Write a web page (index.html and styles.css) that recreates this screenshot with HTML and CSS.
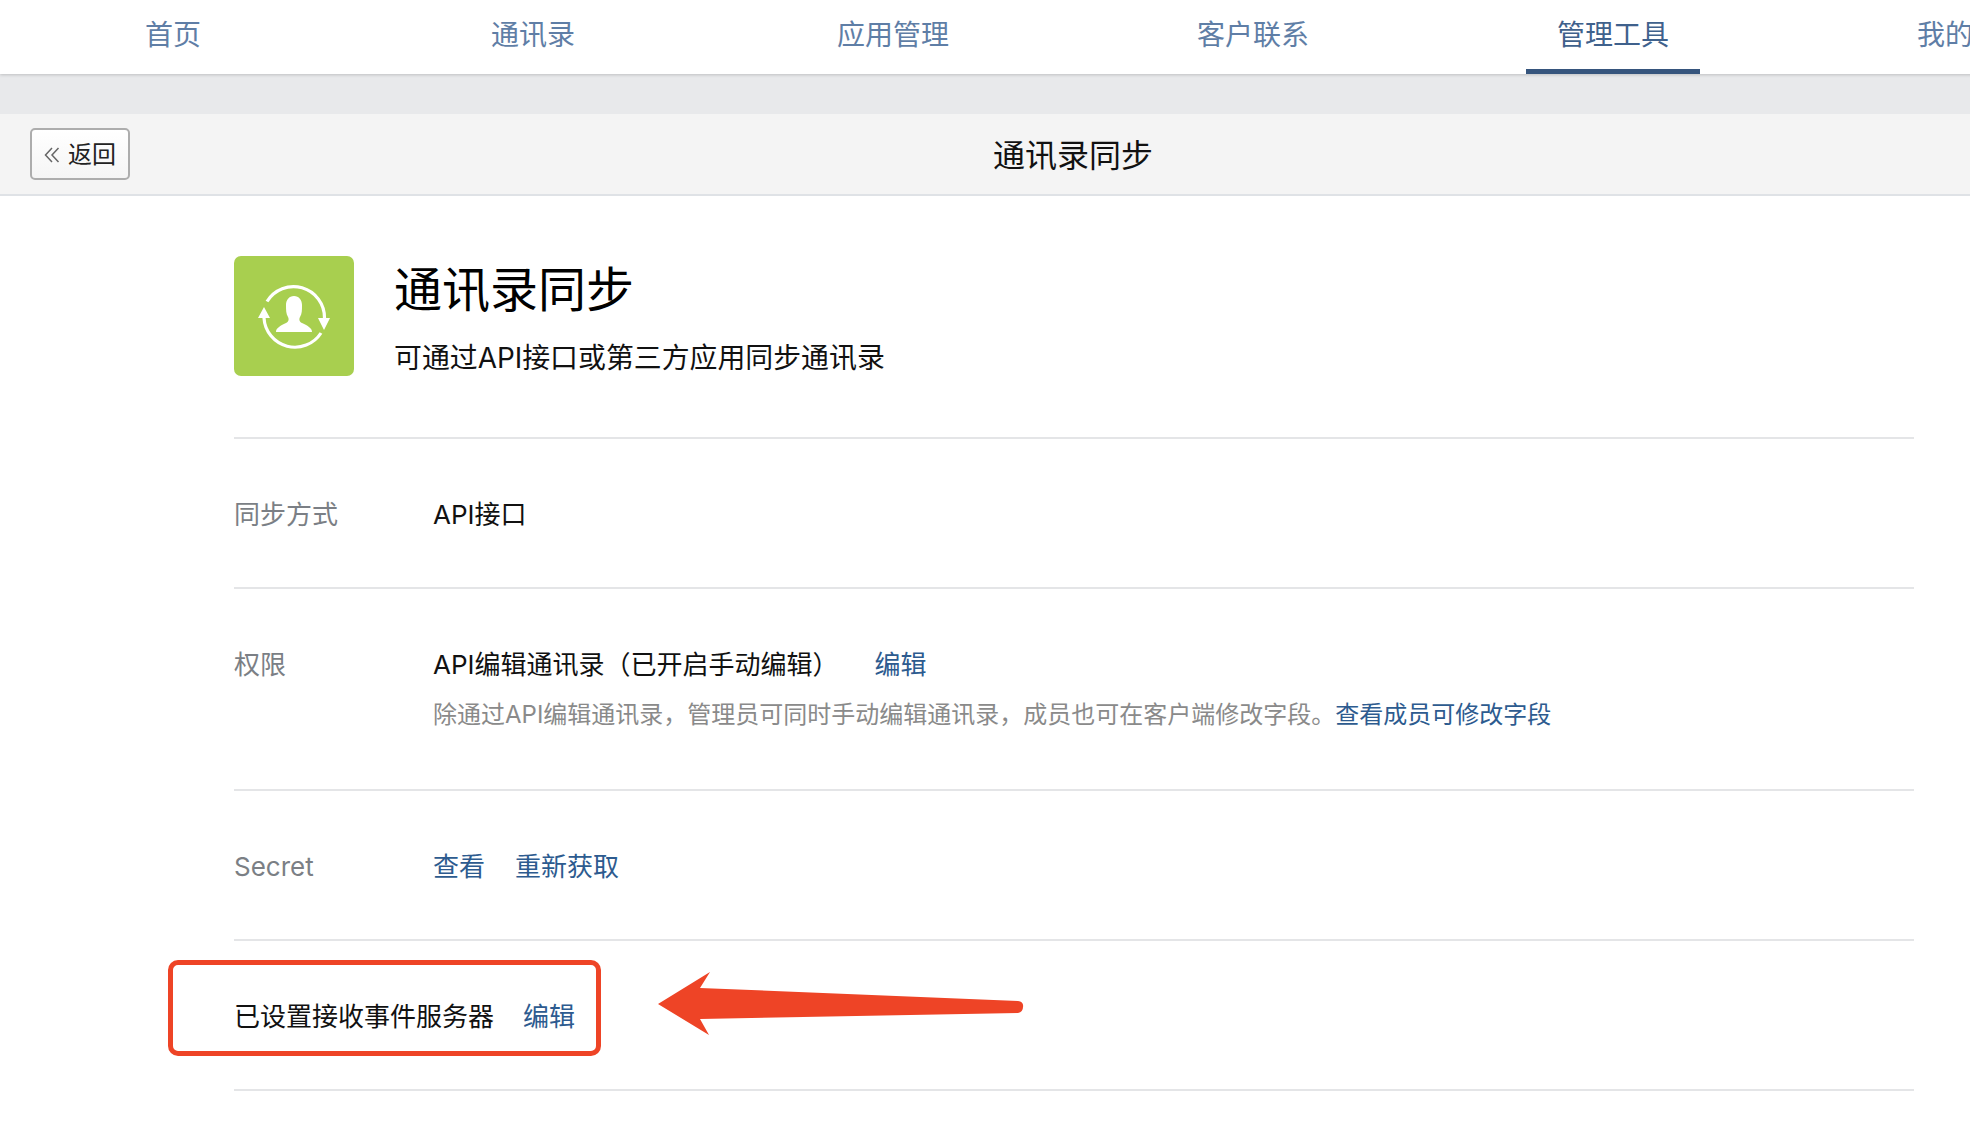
FILE: index.html
```html
<!DOCTYPE html>
<html lang="zh-CN">
<head>
<meta charset="utf-8">
<title>通讯录同步</title>
<link rel="stylesheet" href="styles.css">
</head>
<body>
<div class="page">
  <nav class="nav">
    <a class="tab">首页</a>
    <a class="tab">通讯录</a>
    <a class="tab">应用管理</a>
    <a class="tab">客户联系</a>
    <a class="tab active">管理工具</a>
    <a class="tab">我的企业</a>
  </nav>
  <div class="spacer"></div>
  <header class="bar">
    <div class="bar-left">
      <button class="back">
        <svg class="back-icon" width="16" height="18" viewBox="0 0 16 18"><path d="M8 2 1.500 9 8 16M14.500 2 8 9l6.500 7" fill="none" stroke="#666" stroke-width="1.500"/></svg>
        <span>返回</span>
      </button>
    </div>
    <div class="bar-title">通讯录同步</div>
    <div></div>
  </header>
  <main class="content">
    <section class="intro">
      <svg class="logo" width="120" height="120" viewBox="0 0 120 120">
        <rect width="120" height="120" rx="7" fill="#a8cf4f"/>
        <path d="M33 45.500A31 31 0 0 1 90.500 62" fill="none" stroke="#fff" stroke-width="3.200"/>
        <path d="M30 62A31 31 0 0 0 87 77" fill="none" stroke="#fff" stroke-width="3.200"/>
        <path d="M30 51 24 62H36ZM90 74 84 62H96Z" fill="#fff"/>
        <path d="M42 76C42 72 46 70 52 67 55 65.500 55 63 54 61 52 58 52 54 52 49 52 44 55 40 60 40 65 40 68 44 68 49 68 54 68 58 66 61 65 63 65 65.500 68 67 74 70 78 72 78 76Z" fill="#fff"/>
      </svg>
      <div class="intro-text">
        <h1 class="intro-title">通讯录同步</h1>
        <p class="intro-desc">可通过API接口或第三方应用同步通讯录</p>
      </div>
    </section>
    <section class="row">
      <div class="label">同步方式</div>
      <div class="value">API接口</div>
    </section>
    <section class="row">
      <div class="label">权限</div>
      <div class="value">
        <div>API编辑通讯录（已开启手动编辑）<a class="link link-gap">编辑</a></div>
        <div class="hint">除通过API编辑通讯录，管理员可同时手动编辑通讯录，成员也可在客户端修改字段。<a class="link">查看成员可修改字段</a></div>
      </div>
    </section>
    <section class="row">
      <div class="label">Secret</div>
      <div class="value"><a class="link">查看</a><a class="link link-next">重新获取</a></div>
    </section>
    <section class="row">
      <div>已设置接收事件服务器<a class="link link-last">编辑</a></div>
    </section>
  </main>
</div>
<div class="mark-box"></div>
<svg class="mark-arrow" width="380" height="80" viewBox="650 965 380 80">
  <path d="M658 1003 710 971 700 987 1018 1000Q1024 1001 1023 1006 1023 1011 1018 1012L700 1018 709 1034Z" fill="#ee4426"/>
</svg>
</body>
</html>
```
FILE: styles.css
```css
* { box-sizing: border-box; }
html, body { margin: 0; height: 100%; overflow: hidden; background: #fff; }
body {
  position: relative;
  font-family: Inter, "Noto Sans CJK SC", sans-serif;
  font-size: 26px;
  line-height: 36px;
  color: #111;
}
.page { width: 2116px; }
.nav {
  position: relative;
  display: flex;
  gap: 186px;
  height: 74px;
  padding-left: 86px;
  background: #fff;
  box-shadow: 0 1px 3px rgba(0, 0, 0, .18);
  overflow: hidden;
  clip-path: inset(0 0 -6px 0);
}
.tab {
  flex: 0 0 174px;
  height: 74px;
  font-size: 28px;
  line-height: 70px;
  text-align: center;
  color: #5f7ea6;
}
.tab.active { color: #3f618c; border-bottom: 5px solid #36557d; }
.spacer { height: 40px; background: #e8e9eb; }
.bar {
  display: grid;
  grid-template-columns: 1fr auto 1fr;
  align-items: center;
  height: 82px;
  padding-left: 30px;
  background: #f4f4f4;
  border-bottom: 2px solid #dfe2e6;
}
.bar-left { display: flex; }
.back {
  display: flex;
  align-items: center;
  gap: 8px;
  width: 100px;
  height: 52px;
  padding: 2px 0 0 12px;
  border: 2px solid #adadad;
  border-radius: 5px;
  background: linear-gradient(#fff, #f5f5f5);
  font: inherit;
  font-size: 24px;
  line-height: 38px;
  color: #222;
}
.bar-title { padding-top: 4px; font-size: 32px; color: #111; }
.content { width: 1680px; margin-left: 234px; }
.intro {
  display: flex;
  gap: 40px;
  padding: 60px 0 61px;
  border-bottom: 2px solid #e4e5e7;
}
.logo { display: block; flex: none; }
.intro-text { height: 120px; }
.intro-title {
  margin: 1px 0 0;
  font-size: 48px;
  font-weight: 400;
  line-height: 66px;
  color: #000;
}
.intro-desc { margin: 15px 0 0; font-size: 27.9px; line-height: 40px; color: #111; }
.row {
  display: flex;
  padding: 58px 0 54px;
  border-bottom: 2px solid #e4e5e7;
}
.label { flex: 0 0 199px; color: #7b7f85; }
.hint { margin: 14px 0 2px; font-size: 24px; color: #8a8a8a; }
.link { color: #2d5b8f; }
.link-gap { margin-left: 36px; }
.link-next { margin-left: 30px; }
.link-last { margin-left: 29px; }
.mark-box {
  position: absolute;
  left: 168px;
  top: 960px;
  width: 433px;
  height: 96px;
  border: 5px solid #ee4426;
  border-radius: 10px;
}
.mark-arrow { position: absolute; left: 650px; top: 966px; }
```
